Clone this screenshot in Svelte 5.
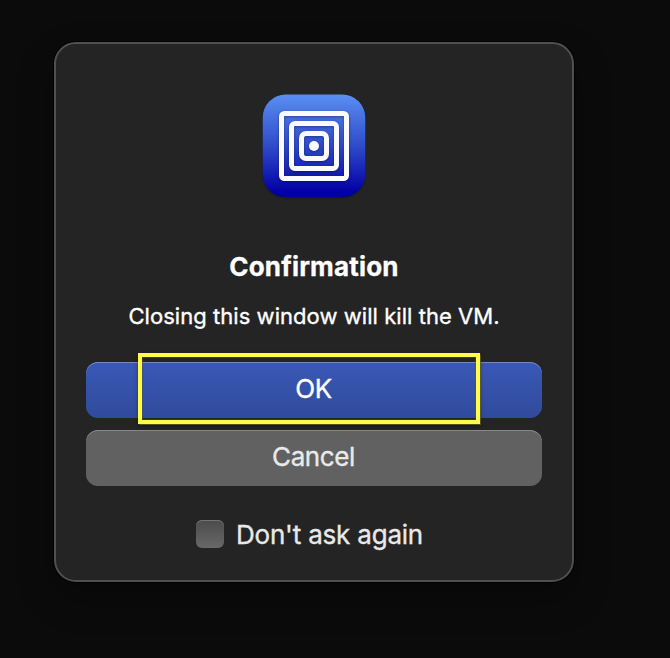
<script>
  let dontAsk = $state(false);
</script>

<main>
  <div class="dialog" role="alertdialog" aria-labelledby="title" aria-describedby="message">
    <svg class="icon" width="104" height="106" viewBox="0 0 104 106" aria-hidden="true">
      <defs>
        <linearGradient id="tile" x1="0" y1="0" x2="0" y2="1">
          <stop offset="0" stop-color="#5a8ef2" />
          <stop offset="0.5" stop-color="#2f4bca" />
          <stop offset="0.95" stop-color="#0200a4" />
          <stop offset="1" stop-color="#0000a0" />
        </linearGradient>
      </defs>
      <rect class="tile" x="0.7" y="0.6" width="102.6" height="102.6" rx="23" fill="url(#tile)" />
      <g class="rings" fill="none" stroke="#fafaff" stroke-width="5">
        <rect x="19.5" y="19.5" width="65" height="65" rx="3" />
        <rect x="29.5" y="29.5" width="45" height="45" rx="3.5" />
        <rect x="39.5" y="39.5" width="25" height="25" rx="4.5" />
        <circle cx="52" cy="52" r="5" fill="#fafaff" stroke="none" />
      </g>
    </svg>
    <h1 id="title">Confirmation</h1>
    <p id="message">Closing this window will kill the VM.</p>
    <div class="actions">
      <button class="primary"><span>OK</span></button>
      <button class="secondary"><span>Cancel</span></button>
      <div class="highlight"></div>
    </div>
    <label>
      <input type="checkbox" bind:checked={dontAsk} />
      <span>Don't ask again</span>
    </label>
  </div>
</main>

<style>
  :global(body) {
    background: #0b0b0b;
  }
  main {
    box-sizing: border-box;
    height: 658px;
    padding: 42px 96px 76px 54px;
    overflow: hidden;
    font-family: Inter, "Liberation Sans", sans-serif;
    color: #fff;
  }
  .dialog {
    box-sizing: border-box;
    width: 520px;
    height: 540px;
    padding: 50px 30px 0;
    border: 2px solid #505050;
    border-radius: 22px;
    background: #242424;
    box-shadow: 0 0 0 1px #000, 0 16px 36px rgba(0, 0, 0, 0.3);
    display: flex;
    flex-direction: column;
    align-items: center;
  }
  .icon {
    display: block;
    flex: none;
  }
  .tile {
    filter: drop-shadow(0 1px 1px rgba(0, 0, 0, 0.3));
  }
  .rings {
    filter: drop-shadow(0 1px 1.5px rgba(0, 0, 40, 0.4));
  }
  h1,
  p {
    margin: 0;
    white-space: nowrap;
  }
  h1 {
    margin-top: 51px;
    font-size: 26px;
    line-height: 32px;
    font-weight: 700;
    letter-spacing: 0.18px;
    -webkit-text-stroke: 0.3px currentColor;
  }
  p {
    margin-top: 19px;
    font-size: 22px;
    line-height: 28px;
    font-weight: 400;
    letter-spacing: 0.05px;
    -webkit-text-stroke: 0.35px currentColor;
  }
  .actions {
    position: relative;
    width: 100%;
    margin-top: 32px;
    display: flex;
    flex-direction: column;
    gap: 12px;
  }
  button {
    height: 56px;
    padding: 0 1px 2px 0;
    border: 0;
    border-radius: 12px;
    font: inherit;
    font-size: 26px;
    line-height: 32px;
    letter-spacing: -0.4px;
    -webkit-text-stroke: 0.35px currentColor;
  }
  .primary {
    color: #fff;
    background: linear-gradient(#3a58b6, #304b9c);
    box-shadow: inset 0 1px 0 #7388c8;
  }
  .secondary {
    color: #e9e9e9;
    background: #616161;
    box-shadow: inset 0 1px 0 #888;
  }
  .highlight {
    position: absolute;
    left: 52px;
    top: -9px;
    box-sizing: border-box;
    width: 342px;
    height: 71px;
    border: 4px solid #fffa4b;
    box-shadow: 0 0 1px 0.5px rgba(100, 96, 20, 0.8), inset 0 0 1px 0.5px rgba(90, 86, 30, 0.8),
      0 2px 4px rgba(0, 0, 0, 0.35);
    pointer-events: none;
  }
  label {
    align-self: flex-start;
    margin: 32px 0 0 110px;
    display: flex;
    align-items: center;
    gap: 12px;
    font-size: 26px;
    line-height: 32px;
    letter-spacing: -0.2px;
    -webkit-text-stroke: 0.35px currentColor;
    color: #e9e9e9;
    white-space: nowrap;
  }
  label span {
    padding-top: 1px;
    margin-bottom: -1px;
  }
  input {
    appearance: none;
    width: 28px;
    height: 28px;
    margin: 0;
    border-radius: 6px;
    background: linear-gradient(#4b4b4b, #686868);
    box-shadow: inset 0 1px 0 #747474;
  }
</style>
